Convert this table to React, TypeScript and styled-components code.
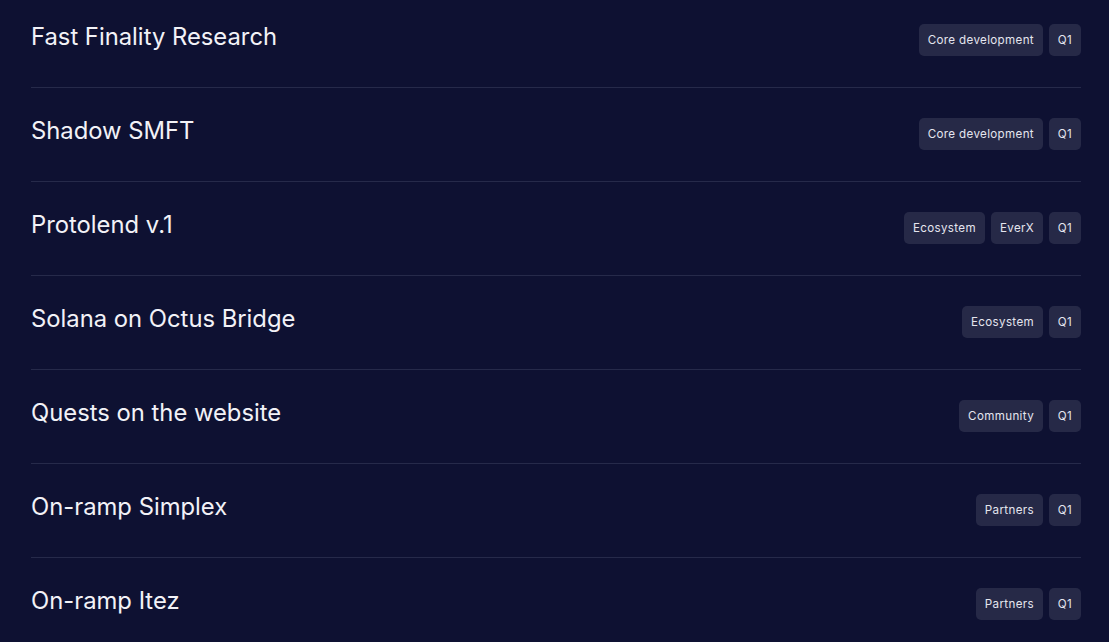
import React from "react";
import styled, {createGlobalStyle} from "styled-components";

const GlobalStyle = createGlobalStyle`
  html, body {
    margin: 0;
    padding: 0;
    background: #0e1132;
    overflow: hidden;
  }
`;

const Page = styled.div`
  width: 1109px;
  height: 642px;
  background: #0e1132;
  font-family: Inter, "Noto Sans", sans-serif;
  overflow: hidden;
`;

const List = styled.ul`
  list-style: none;
  margin: -6px 0 0 0;
  padding: 0 28px 0 31px;
`;

const Row = styled.li`
  display: flex;
  align-items: center;
  justify-content: space-between;
  height: 93px;
  border-bottom: 1px solid #262a4a;
`;

const Title = styled.h3`
  margin: 0 0 8px 0;
  font-size: 23.8px;
  font-weight: 400;
  color: #f2f2f7;
`;

const Tags = styled.div`
  display: flex;
  gap: 6px;
  margin-bottom: 1px;
`;

const Tag = styled.span<{$square?: boolean}>`
  display: inline-flex;
  align-items: center;
  justify-content: center;
  height: 32px;
  min-width: 32px;
  padding: 0 ${props => (props.$square ? "0" : "9px")};
  box-sizing: border-box;
  border-radius: 5px;
  background: #262947;
  color: #e4e5ee;
  font-size: 11.6px;
  letter-spacing: 0.35px;
`;

type Item = {title: string; tags: string[]; quarter: string};

const items: Item[] = [
    {title: "Fast Finality Research", tags: ["Core development"], quarter: "Q1"},
    {title: "Shadow SMFT", tags: ["Core development"], quarter: "Q1"},
    {title: "Protolend v.1", tags: ["Ecosystem", "EverX"], quarter: "Q1"},
    {title: "Solana on Octus Bridge", tags: ["Ecosystem"], quarter: "Q1"},
    {title: "Quests on the website", tags: ["Community"], quarter: "Q1"},
    {title: "On-ramp Simplex", tags: ["Partners"], quarter: "Q1"},
    {title: "On-ramp Itez", tags: ["Partners"], quarter: "Q1"},
];

export default function App() {
    return (
        <Page>
            <GlobalStyle/>
            <List>
                {items.map(item => (
                    <Row key={item.title}>
                        <Title>{item.title}</Title>
                        <Tags>
                            {item.tags.map(tag => <Tag key={tag}>{tag}</Tag>)}
                            <Tag $square>{item.quarter}</Tag>
                        </Tags>
                    </Row>
                ))}
            </List>
        </Page>
    );
}
